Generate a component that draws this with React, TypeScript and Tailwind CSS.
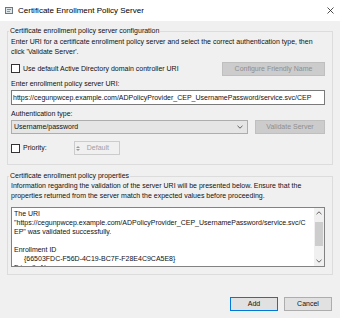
const Checkbox = () => (
  <span className="w-[9px] h-[9px] border border-[#333333] bg-white shrink-0" />
);

const CertIcon = () => (
  <svg width="8" height="7" viewBox="0 0 8 7" className="shrink-0">
    <rect x="0.5" y="0.5" width="7" height="6" fill="#dfe6ea" stroke="#6b7780" />
    <rect x="2" y="2" width="4" height="1" fill="#5a9bb8" />
    <rect x="2" y="4" width="3" height="1" fill="#8a9aa5" />
  </svg>
);

const Chevron = ({ up = false }: { up?: boolean }) => (
  <svg width="6" height="4" viewBox="0 0 6 4" className={up ? "rotate-180" : ""}>
    <path d="M0.5 0.8 L3 3.2 L5.5 0.8" fill="none" stroke="#606060" strokeWidth="1" />
  </svg>
);

export default function App() {
  return (
    <div className="w-[340px] h-[318px] bg-[#f0f0f0] font-['Liberation_Sans',Arial,sans-serif] text-[7px] leading-[10px] text-[#111] flex flex-col overflow-hidden">
      <div className="h-[21px] bg-white flex items-center pl-[5px] pr-[6px] shrink-0">
        <CertIcon />
        <span className="ml-[5px] text-[8px] text-black">Certificate Enrollment Policy Server</span>
        <svg width="7" height="7" viewBox="0 0 7 7" className="ml-auto">
          <path d="M0.5 0.5 L6.5 6.5 M6.5 0.5 L0.5 6.5" stroke="#222" strokeWidth="0.8" />
        </svg>
      </div>

      <fieldset className="mx-[7px] mt-[5px] border border-[#dcdcdc] pl-[3px] pr-[7px] pb-[9px]">
        <legend className="-ml-[2px] px-[1px]">Certificate enrollment policy server configuration</legend>
        <p className="mt-[1px]">
          Enter URI for a certificate enrollment policy server and select the correct authentication type, then
          <br />
          click 'Validate Server'.
        </p>
        <div className="mt-[4px] h-[15px] flex items-center">
          <Checkbox />
          <span className="ml-[3px]">Use default Active Directory domain controller URI</span>
          <div className="ml-auto w-[103px] h-[14px] bg-[#cccccc] border border-[#bfbfbf] flex items-center justify-center text-[#8f8f8f]">
            Configure Friendly Name
          </div>
        </div>
        <div className="mt-[3px]">Enter enrollment policy server URI:</div>
        <div className="mt-[1px] h-[15px] bg-white border border-[#7a7a7a] flex items-center px-[1px] overflow-hidden whitespace-nowrap">
          https://cegunpwcep.example.com/ADPolicyProvider_CEP_UsernamePassword/service.svc/CEP
        </div>
        <div className="mt-[4px]">Authentication type:</div>
        <div className="mt-[1px] h-[14px] flex items-center gap-[7px]">
          <div className="flex-1 h-full bg-[#e5e5e5] border border-[#adadad] flex items-center pl-[2px] pr-[4px]">
            <span>Username/password</span>
            <span className="ml-auto">
              <Chevron />
            </span>
          </div>
          <div className="w-[70px] h-full bg-[#cccccc] border border-[#bfbfbf] flex items-center justify-center text-[#8f8f8f]">
            Validate Server
          </div>
        </div>
        <div className="mt-[7px] h-[14px] flex items-center">
          <Checkbox />
          <span className="ml-[3px]">Priority:</span>
          <div className="ml-[27px] w-[46px] h-full border border-[#cccccc] bg-[#f0f0f0] flex items-center">
            <div className="flex flex-col items-center justify-center gap-[1px] w-[7px] h-full">
              <span className="w-0 h-0 border-x-[2px] border-x-transparent border-b-[2px] border-b-[#9a9a9a]" />
              <span className="w-0 h-0 border-x-[2px] border-x-transparent border-t-[2px] border-t-[#9a9a9a]" />
            </div>
            <span className="ml-[5px] text-[#a0a0a0]">Default</span>
          </div>
        </div>
      </fieldset>

      <fieldset className="mx-[7px] mt-[6px] border border-[#dcdcdc] pl-[3px] pr-[7px] pb-[7px]">
        <legend className="-ml-[2px] px-[1px]">Certificate enrollment policy properties</legend>
        <p>
          Information regarding the validation of the server URI will be presented below. Ensure that the
          <br />
          properties returned from the server match the expected values before proceeding.
        </p>
        <div className="mt-[6px] h-[60px] bg-white border border-[#828282] flex overflow-hidden">
          <div className="flex-1 pl-[2px] pt-[1px] leading-[9px] whitespace-pre overflow-hidden">
            <div>The URI</div>
            <div>"https://cegunpwcep.example.com/ADPolicyProvider_CEP_UsernamePassword/service.svc/C</div>
            <div>EP" was validated successfully.</div>
            <div>&nbsp;</div>
            <div>Enrollment ID</div>
            <div className="pl-[10px]">{"{66503FDC-F56D-4C19-BC7F-F28E4C9CA5E8}"}</div>
            <div>Friendly Name</div>
          </div>
          <div className="w-[10px] bg-[#f0f0f0] flex flex-col items-center">
            <div className="h-[10px] flex items-center justify-center">
              <Chevron up />
            </div>
            <div className="mt-[4px] w-[8px] h-[24px] bg-[#cdcdcd]" />
            <div className="mt-auto h-[10px] flex items-center justify-center">
              <Chevron />
            </div>
          </div>
        </div>
      </fieldset>

      <div className="mt-auto pb-[7px] pr-[8px] flex justify-end gap-[6px]">
        <div className="w-[48px] h-[14px] bg-[#e1e1e1] border border-[#0078d7] flex items-center justify-center">Add</div>
        <div className="w-[48px] h-[14px] bg-[#e1e1e1] border border-[#adadad] flex items-center justify-center">Cancel</div>
      </div>
    </div>
  );
}
